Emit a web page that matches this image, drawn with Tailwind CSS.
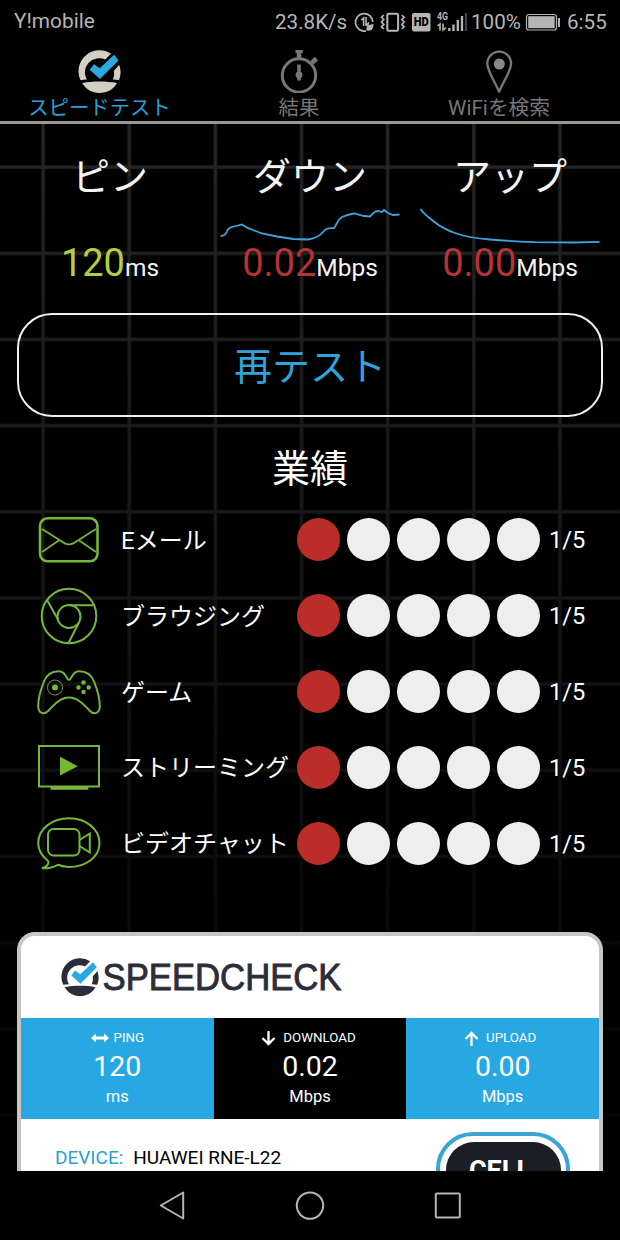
<!DOCTYPE html>
<html lang="ja">
<head>
<meta charset="utf-8">
<title>Speedcheck</title>
<script src="https://cdn.jsdelivr.net/npm/@tailwindcss/browser@4"></script>
</head>
<body class="bg-black">
<svg class="hidden">
  <defs>
    <symbol id="logo" viewBox="0 0 43 43">
      <path d="M2.5 30.2A21 21 0 0 1 33 3.7L27.3 9.6A14.2 14.2 0 0 0 8.9 29.6C6.5 29.6 4.4 29.8 2.5 30.2Z" fill="currentColor"/>
      <path d="M41.2 14.8A21 21 0 0 1 41 30.2C39.2 29.8 37.2 29.6 34.8 29.6C36.1 27 36.3 24 35.9 20.8Z" fill="currentColor"/>
      <path d="M4.2 33C15 31 28 31 39 33C35.5 39.5 29 43 21.5 43C14 43 7.8 39.500 4.200 33Z" fill="currentColor"/>
      <path d="M11.700 19.700L16 14.200L21.700 18.300L36.200 4.800L40.500 10.400L22 29Z" fill="#2aa9e0"/>
    </symbol>
  </defs>
</svg>
<div class="flex h-[1240px] w-[620px] flex-col overflow-hidden bg-black font-[Roboto,'Noto_Sans_CJK_JP',sans-serif] whitespace-nowrap">

  <!-- Status bar -->
  <header class="flex h-[44px] shrink-0 items-center pr-[13px] pl-[14px] text-[20px] text-[#b5b5b5]">
    <span class="text-[20.800px]">Y!mobile</span>
    <div class="ml-auto flex items-center">
      <span class="w-[79px] text-[20.600px]">23.8K/s</span>
      <svg class="w-[157px] shrink-0" height="26" viewBox="354 8 157 26" fill="none" stroke="#b5b5b5">
        <path d="M366 29.800A8.700 8.700 0 1 1 372.800 21" stroke-width="1.700"/>
        <path d="M361.300 19.200L363.600 17V25M366 16V24.200H369.500M366 24.500L369 21.500" stroke-width="1.600"/>
        <path d="M366.500 29.200C365.500 25 369 23.800 373.500 23C373.500 28 371 31 366.500 29.200Z" fill="#b5b5b5" stroke="none"/>
        <rect x="387.300" y="12.800" width="10.800" height="17" rx="1.500" stroke-width="2"/>
        <path d="M383.800 14L381.500 16.300L383.800 18.600L381.500 21L383.800 23.400L381.500 25.700L383.800 28M401.800 14L404.100 16.300L401.800 18.600L404.100 21L401.800 23.400L404.100 25.700L401.800 28" stroke-width="1.700"/>
        <rect x="412" y="12" width="18.500" height="18.500" rx="2" fill="#b5b5b5" stroke="none"/>
        <text x="421.200" y="25.200" text-anchor="middle" font-size="12" font-weight="900" fill="#000" stroke="none" textLength="15" lengthAdjust="spacingAndGlyphs">HD</text>
        <text x="437" y="19" font-size="11" font-weight="700" fill="#b5b5b5" stroke="none" textLength="11" lengthAdjust="spacingAndGlyphs">4G</text>
        <path d="M437.500 25L440 23V29.500M443 22.500V29L446 26.500" stroke-width="1.600"/>
        <path d="M449.300 27V30M453.500 23.500V30M457.800 19V30M462 15V30" stroke-width="2.300"/>
        <path d="M466 12V30" stroke="#444" stroke-width="2.300"/>
      </svg>
      <span class="-ml-[40px] w-[53px] text-[20.600px]">100%</span>
      <svg class="shrink-0" width="37" height="20" viewBox="524 11 37 20" fill="none" stroke="#b5b5b5">
        <rect x="526.500" y="13.500" width="30" height="15.500" rx="2.500" stroke-width="1.200"/>
        <rect x="528.200" y="15.200" width="26.500" height="12" fill="#b5b5b5" stroke="none"/>
        <path d="M559 17V26" stroke-width="2"/>
      </svg>
      <span class="ml-[6px] w-[40px] text-[20.600px]">6:55</span>
    </div>
  </header>

  <!-- Tabs -->
  <nav class="grid h-[80px] shrink-0 grid-cols-[199px_200px_200px_21px] border-b-3 border-[#9b9898] text-[20.400px] text-[#777]">
    <div class="flex flex-col items-center pt-[6px] text-[#2aa0d8]">
      <svg class="h-[43px] w-[43px] text-[#d3cfc4]"><use href="#logo"/></svg>
      <span class="h-6 leading-[30px]">スピードテスト</span>
    </div>
    <div class="flex flex-col items-center pt-[6px]">
      <svg width="40" height="43" viewBox="279 50 40 43" fill="none" stroke="#777">
        <circle cx="299" cy="75.500" r="16.700" stroke-width="3"/>
        <path d="M295.500 51.500H302.800" stroke-width="3.200"/><path d="M299 51V59" stroke-width="4.500"/>
        <path d="M311.800 63L316.500 58.500" stroke-width="4.500"/>
        <path d="M299 64.500V80.500" stroke-width="3.500"/><circle cx="299" cy="75" r="3.400" fill="#777" stroke="none"/>
      </svg>
      <span class="h-6 leading-[30px]">結果</span>
    </div>
    <div class="flex flex-col items-center pt-[6px]">
      <svg width="40" height="43" viewBox="479 50 40 43" fill="none" stroke="#777">
        <path d="M499 91.500C495 82 487.300 71 487.300 63.500A11.900 11.900 0 0 1 511.100 63.500C511.100 71 503 82 499.200 91.500Z" stroke-width="2.300"/>
        <circle cx="499.300" cy="64" r="5.500" fill="#888" stroke="none"/>
      </svg>
      <span class="h-6 text-[20.700px] leading-[30px]">WiFiを検索</span>
    </div>
  </nav>

  <!-- Page content over the fading grid -->
  <main class="relative isolate h-[1047px] shrink-0 overflow-hidden">
    <svg class="absolute inset-0 -z-10" width="620" height="1047">
      <defs>
        <pattern id="grid" width="86.150" height="86.150" patternUnits="userSpaceOnUse" x="41.200" y="41.200">
          <path d="M1.900 0V86.150M0 1.900H86.150" stroke="#252525" stroke-width="3.400"/>
        </pattern>
        <linearGradient id="fade" x1="0" y1="0" x2="0" y2="1"><stop offset="0" stop-color="#000" stop-opacity="0"/><stop offset="1" stop-color="#000" stop-opacity="0.950"/></linearGradient>
      </defs>
      <rect width="620" height="1047" fill="url(#grid)"/>
      <rect width="620" height="1047" fill="url(#fade)"/>
    </svg>

    <section class="grid h-[189px] grid-cols-3 px-[10px] pt-[22px] text-center text-[#f4f4f4]">
      <div class="flex flex-col">
        <h2 class="h-[60px] text-[38px] leading-[62px]">ピン</h2>
        <div class="h-[36px]"></div>
        <p class="leading-[42px]"><span class="text-[38px] text-[#b0d13c]">120</span><span class="text-[24.500px]">ms</span></p>
      </div>
      <div class="flex flex-col">
        <h2 class="h-[60px] text-[38px] leading-[62px]">ダウン</h2>
        <svg class="h-[36px] w-[200px]" viewBox="210 206 200 36" fill="none" stroke="#3fa3dc" stroke-width="1.800" overflow="visible">
          <path d="M220.500 236C225 236 226 234 228 229.500C229.500 227 231 227.500 234 226.500L242 224.500C245 226.500 247 228 253 230L262 233.500L277 236.500L293 239L308 239.500C315 238.500 320 236 324 231C326 227.500 330 228.500 334 228C337 225 336 221 342 217C348 214.500 350 214 354 213.500L364 216L370 216.500C374 213 374 211 378 211L382 212L384 210L388 213L393 215L399.500 214.500"/>
        </svg>
        <p class="leading-[42px]"><span class="text-[38px] text-[#b53235]">0.02</span><span class="text-[24.500px]">Mbps</span></p>
      </div>
      <div class="flex flex-col">
        <h2 class="h-[60px] text-[38px] leading-[62px]">アップ</h2>
        <svg class="h-[36px] w-[200px]" viewBox="410 206 200 36" fill="none" stroke="#3fa3dc" stroke-width="1.800" overflow="visible">
          <path d="M420.500 209C424 214 428 217 432 220C440 227 448 231 458 234C468 237.500 478 238.500 490 239.500C506 241 518 241.500 535 242.200L575 242.500L599.500 241.800"/>
        </svg>
        <p class="leading-[42px]"><span class="text-[38px] text-[#b53235]">0.00</span><span class="text-[24.500px]">Mbps</span></p>
      </div>
    </section>

    <button class="mx-[17px] flex h-[104px] w-[586px] items-center justify-center rounded-[35px] border-2 border-[#f0f0f0] pt-[4px] text-[38px] text-[#2fa3dd]">再テスト</button>

    <h2 class="mt-[20px] h-[65px] text-center text-[38px] leading-[65px] text-white">業績</h2>

    <ul class="flex flex-col text-[24px] text-white">
      <li class="grid h-[75.850px] grid-cols-[121px_176px_252px_1fr] items-center">
        <svg class="ml-[34px]" width="70" height="60" viewBox="34 510 70 60" fill="none" stroke="#76b63a"><rect x="40" y="518.300" width="57.500" height="43" rx="7.500" stroke-width="2.600"/><path d="M42 529L61 541C67 545.500 71 545.500 77 541L96 529M42 552L59.500 540M96 552L78.500 540" stroke-width="1.700"/></svg>
        <span class="pt-[2px]">Eメール</span>
        <div class="flex gap-[7px]"><i class="size-[43px] rounded-full bg-[#bb2d29]"></i><i class="size-[43px] rounded-full bg-[#eee]"></i><i class="size-[43px] rounded-full bg-[#eee]"></i><i class="size-[43px] rounded-full bg-[#eee]"></i><i class="size-[43px] rounded-full bg-[#eee]"></i></div>
        <span class="pt-[2px] text-[23.600px]">1/5</span>
      </li>
      <li class="grid h-[75.850px] grid-cols-[121px_176px_252px_1fr] items-center">
        <svg class="ml-[34px]" width="70" height="60" viewBox="34 585.500 70 60" fill="none" stroke="#76b63a" stroke-width="2"><circle cx="69" cy="615.500" r="27.300"/><circle cx="69" cy="616" r="11.500"/><path d="M69 604.800H93M58 619L47 599.500M79 622L68.500 642.500"/></svg>
        <span class="pt-[2px]">ブラウジング</span>
        <div class="flex gap-[7px]"><i class="size-[43px] rounded-full bg-[#bb2d29]"></i><i class="size-[43px] rounded-full bg-[#eee]"></i><i class="size-[43px] rounded-full bg-[#eee]"></i><i class="size-[43px] rounded-full bg-[#eee]"></i><i class="size-[43px] rounded-full bg-[#eee]"></i></div>
        <span class="pt-[2px] text-[23.600px]">1/5</span>
      </li>
      <li class="grid h-[75.850px] grid-cols-[121px_176px_252px_1fr] items-center">
        <svg class="ml-[34px]" width="70" height="60" viewBox="34 661.500 70 60" fill="none" stroke="#76b63a"><path d="M69 679.500C71.500 679.500 72 670.800 79 670.800C85 670.800 91 673 94 681C98 691 100 700 99.800 706C99.500 713 94 714.500 90 710.500C83 703 77 697 69 697C61 697 55 703 48 710.500C44 714.500 38.500 713 38.200 706C38 700 40 691 44 681C47 673 53 670.800 59 670.800C66 670.800 66.500 679.500 69 679.500Z" stroke-width="2"/><circle cx="55" cy="687" r="7.500" stroke-width="1" stroke="#789350"/><g fill="#76b63a" stroke="none"><circle cx="55" cy="687" r="3"/><circle cx="83.500" cy="682" r="2.200"/><circle cx="83.500" cy="691.500" r="2.200"/><circle cx="78.500" cy="687" r="2.200"/><circle cx="88.700" cy="687" r="2.200"/></g></svg>
        <span class="pt-[2px]">ゲーム</span>
        <div class="flex gap-[7px]"><i class="size-[43px] rounded-full bg-[#bb2d29]"></i><i class="size-[43px] rounded-full bg-[#eee]"></i><i class="size-[43px] rounded-full bg-[#eee]"></i><i class="size-[43px] rounded-full bg-[#eee]"></i><i class="size-[43px] rounded-full bg-[#eee]"></i></div>
        <span class="pt-[2px] text-[23.600px]">1/5</span>
      </li>
      <li class="grid h-[75.850px] grid-cols-[121px_176px_252px_1fr] items-center">
        <svg class="ml-[34px]" width="70" height="60" viewBox="34 737 70 60" fill="none" stroke="#76b63a"><rect x="39" y="746" width="60" height="40.500" stroke-width="2"/><path d="M50.500 788H88.300" stroke-width="3.600"/><path d="M60 756.800V775.500L77.800 766.200Z" fill="#78b82e" stroke="none"/></svg>
        <span class="pt-[2px]">ストリーミング</span>
        <div class="flex gap-[7px]"><i class="size-[43px] rounded-full bg-[#bb2d29]"></i><i class="size-[43px] rounded-full bg-[#eee]"></i><i class="size-[43px] rounded-full bg-[#eee]"></i><i class="size-[43px] rounded-full bg-[#eee]"></i><i class="size-[43px] rounded-full bg-[#eee]"></i></div>
        <span class="pt-[2px] text-[23.600px]">1/5</span>
      </li>
      <li class="grid h-[75.850px] grid-cols-[121px_176px_252px_1fr] items-center">
        <svg class="ml-[34px]" width="70" height="60" viewBox="34 813 70 60" fill="none" stroke="#76b63a" stroke-width="2"><path d="M42 868.300C46 867.500 49.500 864 48 861C42 856 38.200 850 38.200 843C38.200 829 52 818.200 69 818.200C86 818.200 99.500 829 99.500 843C99.500 857 86 867 69 867C64 867 61 866 58 864.800C53 867.500 47 868.500 42 868.300Z"/><rect x="48" y="829" width="31.500" height="26.500" rx="5.500"/><path d="M79.500 840L89.800 833.500V852.500L79.500 846"/></svg>
        <span class="pt-[2px]">ビデオチャット</span>
        <div class="flex gap-[7px]"><i class="size-[43px] rounded-full bg-[#bb2d29]"></i><i class="size-[43px] rounded-full bg-[#eee]"></i><i class="size-[43px] rounded-full bg-[#eee]"></i><i class="size-[43px] rounded-full bg-[#eee]"></i><i class="size-[43px] rounded-full bg-[#eee]"></i></div>
        <span class="pt-[2px] text-[23.600px]">1/5</span>
      </li>
    </ul>

    <article class="mx-[17px] mt-[51px] h-[300px] overflow-hidden rounded-[18px] border-4 border-[#c6c6c6] bg-white">
      <div class="flex h-[82px] items-center pl-[40px] text-[#2b2d3b]">
        <svg class="h-[38px] w-[38px]"><use href="#logo"/></svg>
        <svg width="260" height="50" viewBox="0 0 260 50" class="ml-[3px]"><text x="0.500" y="37.500" font-family="Liberation Sans" font-size="36" fill="#2b2d3b" stroke="#2b2d3b" stroke-width="0.900" textLength="239" lengthAdjust="spacingAndGlyphs">SPEEDCHECK</text></svg>
      </div>
      <div class="grid h-[101px] grid-cols-3 text-center text-white">
        <div class="bg-[#27a8e2] pt-[9px]">
          <div class="flex h-[22px] items-center justify-center gap-[5px] text-[13.300px]"><svg width="18" height="10" viewBox="0 0 18 10" fill="#fff"><path d="M0 5L5 .5V3.600H13V.5L18 5L13 9.500V6.400H5V9.500Z"/></svg>PING</div>
          <div class="h-[36px] text-[28.500px] leading-[36px]">120</div>
          <div class="h-[22px] text-[16.500px] leading-[24px]">ms</div>
        </div>
        <div class="bg-black pt-[9px]">
          <div class="flex h-[22px] items-center justify-center gap-[7px] pr-[3px] text-[13.300px]"><svg width="15" height="15" viewBox="0 0 15 15" fill="none" stroke="#fff" stroke-width="2.300"><path d="M7.500 0V13M1.500 7L7.500 13L13.500 7"/></svg>DOWNLOAD</div>
          <div class="h-[36px] text-[28.500px] leading-[36px]">0.02</div>
          <div class="h-[22px] text-[16.500px] leading-[24px]">Mbps</div>
        </div>
        <div class="bg-[#27a8e2] pt-[9px]">
          <div class="flex h-[22px] items-center justify-center gap-[7px] pr-[5px] text-[13.300px]"><svg width="15" height="15" viewBox="0 0 15 15" fill="none" stroke="#fff" stroke-width="2.300"><path d="M7.500 15V2M1.500 8L7.500 2L13.500 8"/></svg>UPLOAD</div>
          <div class="h-[36px] text-[28.500px] leading-[36px]">0.00</div>
          <div class="h-[22px] text-[16.500px] leading-[24px]">Mbps</div>
        </div>
      </div>
      <div class="flex items-start justify-between pr-[29px] pl-[34px]">
        <p class="pt-[24px] text-[19px] leading-[30px] text-black"><span class="mr-[10px] text-[#2f9fcb]">DEVICE:</span>HUAWEI RNE-L22</p>
        <div class="mt-[13px] h-[90px] w-[134px] rounded-[37px] border-[4px] border-[#3aa5d2] p-[5.500px]">
          <div class="h-full rounded-[28px] bg-[#1b1d27] pt-[12px] pr-[6px] text-center text-[27px] leading-[34px] font-bold text-white">CELL</div>
        </div>
      </div>
    </article>
  </main>

  <footer class="h-[69px] shrink-0 bg-black">
    <svg width="620" height="69" viewBox="0 1171 620 69" fill="none" stroke="#b4b4b4" stroke-width="2" stroke-linejoin="round">
      <path d="M183.200 1192.500V1218.500L160.800 1205.500Z"/><circle cx="310" cy="1205.600" r="13.200"/><rect x="435.800" y="1193.500" width="24" height="24" rx="1"/>
    </svg>
  </footer>
</div>
</body>
</html>
